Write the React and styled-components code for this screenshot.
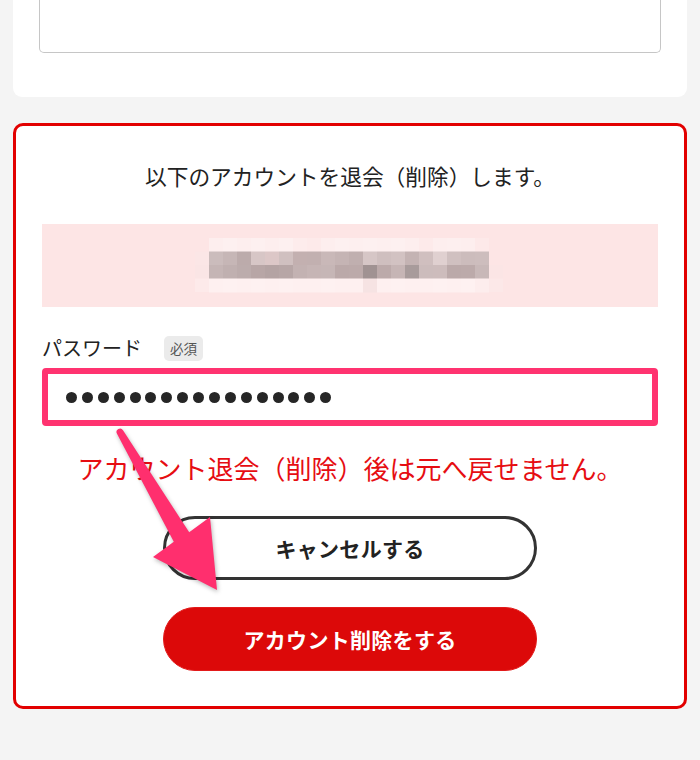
import React from "react";
import styled, { createGlobalStyle } from "styled-components";

const GlobalStyle = createGlobalStyle`
  html, body {
    margin: 0;
    padding: 0;
    background: #f4f4f4;
  }
  body {
    font-family: "Noto Sans CJK JP", "Noto Sans", sans-serif;
    color: #222;
  }
`;

const Page = styled.div`
  position: relative;
  width: 700px;
  height: 760px;
  box-sizing: border-box;
  padding: 0 13px;
  overflow: hidden;
`;

const FormCard = styled.section`
  background: #fff;
  border-radius: 0 0 9px 9px;
  padding: 0 26px 44px;
`;

const MemoBox = styled.div`
  height: 52px;
  border: 1.5px solid #c6c6c6;
  border-top: none;
  border-radius: 0 0 5px 5px;
  background: #fff;
`;

const DangerCard = styled.section`
  margin-top: 26px;
  background: #fff;
  border: 3px solid #e20000;
  border-radius: 10px;
  padding: 34px 26px 35px;
  display: flex;
  flex-direction: column;
`;

const Lead = styled.p`
  margin: 0;
  font-size: 21.7px;
  line-height: 32px;
  text-align: center;
  color: #222;
`;

const AccountBox = styled.div`
  margin-top: 32px;
  height: 83px;
  background: #fde5e5;
  display: flex;
  align-items: center;
  justify-content: center;
`;

const FieldLabelRow = styled.div`
  margin-top: 27px;
  height: 28px;
  display: flex;
  align-items: center;
`;

const FieldLabel = styled.span`
  font-size: 20px;
  line-height: 28px;
  color: #222;
`;

const RequiredBadge = styled.span`
  margin-left: 22px;
  height: 25px;
  padding: 0 6px;
  border-radius: 5px;
  background: #ebebeb;
  color: #555;
  font-size: 13.5px;
  line-height: 25px;
`;

const PasswordField = styled.div`
  margin-top: 6px;
  height: 58px;
  box-sizing: border-box;
  border: 6px solid #ff3370;
  border-radius: 4px;
  background: #fff;
  padding: 0 18px;
  display: flex;
  align-items: center;
  gap: 4.9px;
`;

const MaskDot = styled.span`
  width: 11px;
  height: 11px;
  border-radius: 50%;
  background: #262626;
  flex: none;
`;

const Warning = styled.p`
  margin: 24px 0 0;
  font-size: 26px;
  line-height: 36px;
  text-align: center;
  color: #e60d12;
`;

const PillButton = styled.button`
  align-self: center;
  width: 374px;
  height: 64px;
  margin-top: ${(p) => p.$gap}px;
  box-sizing: border-box;
  border-radius: 32px;
  font-family: inherit;
  font-size: 21px;
  font-weight: 700;
  letter-spacing: 0.3px;
  cursor: pointer;
  border: ${(p) => (p.$danger ? "1px solid #e21a1a" : "3px solid #333")};
  background: ${(p) => (p.$danger ? "#dc0909" : "#fff")};
  color: ${(p) => (p.$danger ? "#fff" : "#222")};
`;

const Pointer = styled.svg`
  position: absolute;
  left: 0;
  top: 0;
  pointer-events: none;
  filter: drop-shadow(1px 2px 2px rgba(0, 0, 0, 0.28));
`;

/* pixelated account name */
const mosaicRows = [
  ["#fdeeee", "#fdf0f0", "#fdeeee", "#fdf0f0", "#fdeeee", "#fdf0f0", "#fdecec", "#fdeaea", "#fdeeee", "#fdf0f0", "#fdefef", "#fdf0f0", "#fdefef", "#fdf0f0", "#fdeeee", "#fdeaea", "#fdeeee", "#fdefef", "#fdeeee", "#fde9e9"],
  ["#cbbcbc", "#c6b6b6", "#bcabab", "#d7c6c6", "#dcc7c7", "#d0c0c0", "#c3b0b0", "#c2b0b0", "#c9b8b8", "#c5b4b4", "#c0afaf", "#d6c6c6", "#cfbfbf", "#d2c2c2", "#c4b3b3", "#d0bfbf", "#e0d0d0", "#d0c0c0", "#ccbcbc", "#cdbdbd"],
  ["#c5b5b5", "#c0b0b0", "#bcacac", "#b8a6a6", "#b4a3a3", "#b7a6a6", "#c3b2b2", "#c6b5b5", "#c6b6b6", "#bba9a9", "#bcaaaa", "#a09292", "#bcaaaa", "#c6b5b5", "#a89b9b", "#ccbcbc", "#cdbcbc", "#bba9a9", "#bcaaaa", "#c8b8b8"],
  ["#fef0f0", "#fef1f1", "#fef0f0", "#fef1f1", "#fef0f0", "#fef1f1", "#fef0f0", "#fef0f0", "#fef1f1", "#fef0f0", "#fef0f0", "#f6e3e3", "#fef0f0", "#fef1f1", "#fef0f0", "#fef0f0", "#fef1f1", "#fef0f0", "#fef1f1", "#fdeded"],
];

function AccountMosaic() {
  const cw = 14;
  const ch = 13.5;
  return (
    <svg width="310" height="56" viewBox="0 0 310 56" aria-hidden="true">
      <rect x="0" y={ch} width="14" height={ch} fill="#fbe6e6" />
      <rect x="0" y={ch * 2} width="14" height={ch} fill="#fae5e5" />
      <rect x="0" y={ch * 3} width="14" height={ch} fill="#fdeaea" />
      <rect x="294" y={ch * 2} width="14" height={ch} fill="#fbe5e5" />
      <rect x="294" y={ch * 3} width="14" height={ch} fill="#fce8e8" />
      {mosaicRows.map((row, r) =>
        row.map((c, i) => (
          <rect key={`${r}-${i}`} x={14 + i * cw} y={r * ch} width={cw} height={ch + 0.5} fill={c} />
        ))
      )}
    </svg>
  );
}

export default function App() {
  return (
    <>
      <GlobalStyle />
      <Page>
        <FormCard>
          <MemoBox />
        </FormCard>

        <DangerCard>
          <Lead>以下のアカウントを退会（削除）します。</Lead>
          <AccountBox>
            <AccountMosaic />
          </AccountBox>

          <FieldLabelRow>
            <FieldLabel>パスワード</FieldLabel>
            <RequiredBadge>必須</RequiredBadge>
          </FieldLabelRow>
          <PasswordField aria-label="パスワード">
            {Array.from({ length: 17 }, (_, i) => (
              <MaskDot key={i} />
            ))}
          </PasswordField>

          <Warning>アカウント退会（削除）後は元へ戻せません。</Warning>

          <PillButton $gap={30}>キャンセルする</PillButton>
          <PillButton $gap={27} $danger>
            アカウント削除をする
          </PillButton>
        </DangerCard>

        <Pointer width="700" height="760" viewBox="0 0 700 760" aria-hidden="true">
          <path
            d="M123 430.2 L189.2 532.3 L210 517 L217 590 L153 557 L173.8 541.7 L117 433.8 A3.5 3.5 0 0 1 123 430.2 Z"
            fill="#ff2f6e"
            strokeLinejoin="round"
          />
        </Pointer>
      </Page>
    </>
  );
}
